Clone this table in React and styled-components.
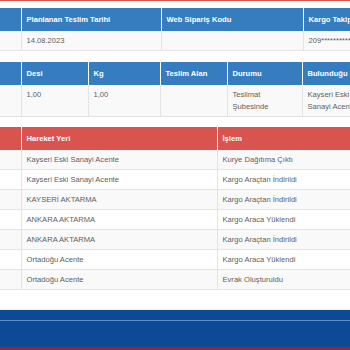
import React from 'react'
import styled, { createGlobalStyle } from 'styled-components'

const GlobalStyle = createGlobalStyle`
  html, body {
    margin: 0;
    padding: 0;
    background: #fff;
    overflow: hidden;
  }
  body {
    font-family: "Liberation Sans", Arial, sans-serif;
    font-size: 7.6px;
    color: #5e5e5e;
  }
`

const Page = styled.div`
  width: 350px;
  height: 350px;
  overflow: hidden;
  display: flex;
  flex-direction: column;
  border-top: 1px solid #d9534f;
  box-sizing: border-box;
`

const Table = styled.table`
  table-layout: fixed;
  border-collapse: collapse;
  width: ${props => props.width}px;
  margin-top: ${props => props.gap}px;
  flex-shrink: 0;
`

const Head = styled.th`
  background: ${props => (props.danger ? '#d9534f' : '#367dc0')};
  color: #fff;
  font-weight: bold;
  text-align: left;
  padding: 5px 5px;
  line-height: 13px;
  white-space: nowrap;
  overflow: hidden;
  border-left: 1px solid ${props => (props.danger ? 'rgba(255,255,255,0.45)' : 'rgba(255,255,255,0.35)')};
  &:first-child {
    border-left: none;
  }
`

const Row = styled.tr`
  background: ${props => (props.striped ? '#f9f9f9' : '#fff')};
  border-bottom: 1px solid #e4e4e4;
`

const Cell = styled.td`
  padding: 4px 5px;
  line-height: ${props => (props.wrap ? '11.5px' : '11px')};
  vertical-align: top;
  text-align: left;
  border-left: 1px solid #e4e4e4;
  overflow: hidden;
  white-space: ${props => (props.wrap ? 'normal' : 'nowrap')};
  &:first-child {
    border-left: none;
  }
`

const Footer = styled.footer`
  margin-top: auto;
  display: flex;
  flex-direction: column;
  border-top: 1px solid #e8eef6;
  border-bottom: 3px solid #a8193c;
`

const FooterTop = styled.div`
  height: 10px;
  background: #0c4a96;
  border-bottom: 1px solid #5d8fcb;
`

const FooterMain = styled.div`
  height: 26px;
  background: #0c4a96;
`

const movements = [
  ['Kayseri Eski Sanayi Acente', 'Kurye Dağıtıma Çıktı'],
  ['Kayseri Eski Sanayi Acente', 'Kargo Araçtan İndirildi'],
  ['KAYSERİ AKTARMA', 'Kargo Araçtan İndirildi'],
  ['ANKARA AKTARMA', 'Kargo Araca Yüklendi'],
  ['ANKARA AKTARMA', 'Kargo Araçtan İndirildi'],
  ['Ortadoğu Acente', 'Kargo Araca Yüklendi'],
  ['Ortadoğu Acente', 'Evrak Oluşturuldu'],
]

const App = () => {
  return (
    <>
      <GlobalStyle />
      <Page>
        <Table width={420} gap={7}>
          <colgroup>
            <col style={{ width: 21 }} />
            <col style={{ width: 140 }} />
            <col style={{ width: 142 }} />
            <col style={{ width: 117 }} />
          </colgroup>
          <thead>
            <tr>
              <Head />
              <Head>Planlanan Teslim Tarihi</Head>
              <Head>Web Sipariş Kodu</Head>
              <Head>Kargo Takip No</Head>
            </tr>
          </thead>
          <tbody>
            <Row striped>
              <Cell />
              <Cell>14.08.2023</Cell>
              <Cell />
              <Cell>209***********</Cell>
            </Row>
          </tbody>
        </Table>

        <Table width={440} gap={11}>
          <colgroup>
            <col style={{ width: 21 }} />
            <col style={{ width: 67 }} />
            <col style={{ width: 72 }} />
            <col style={{ width: 67 }} />
            <col style={{ width: 75 }} />
            <col style={{ width: 70 }} />
            <col style={{ width: 68 }} />
          </colgroup>
          <thead>
            <tr>
              <Head />
              <Head>Desi</Head>
              <Head>Kg</Head>
              <Head>Teslim Alan</Head>
              <Head>Durumu</Head>
              <Head>Bulunduğu Yer</Head>
              <Head>Tarih</Head>
            </tr>
          </thead>
          <tbody>
            <Row striped>
              <Cell />
              <Cell>1,00</Cell>
              <Cell>1,00</Cell>
              <Cell />
              <Cell wrap>Teslimat Şubesinde</Cell>
              <Cell wrap>Kayseri Eski Sanayi Acente</Cell>
              <Cell />
            </Row>
          </tbody>
        </Table>

        <Table width={420} gap={10}>
          <colgroup>
            <col style={{ width: 21 }} />
            <col style={{ width: 196 }} />
            <col style={{ width: 203 }} />
          </colgroup>
          <thead>
            <tr>
              <Head danger />
              <Head danger>Hareket Yeri</Head>
              <Head danger>İşlem</Head>
            </tr>
          </thead>
          <tbody>
            {movements.map(([place, action], i) => (
              <Row key={i} striped={i % 2 === 0}>
                <Cell />
                <Cell>{place}</Cell>
                <Cell>{action}</Cell>
              </Row>
            ))}
          </tbody>
        </Table>

        <Footer>
          <FooterTop />
          <FooterMain />
        </Footer>
      </Page>
    </>
  )
}

export default App
